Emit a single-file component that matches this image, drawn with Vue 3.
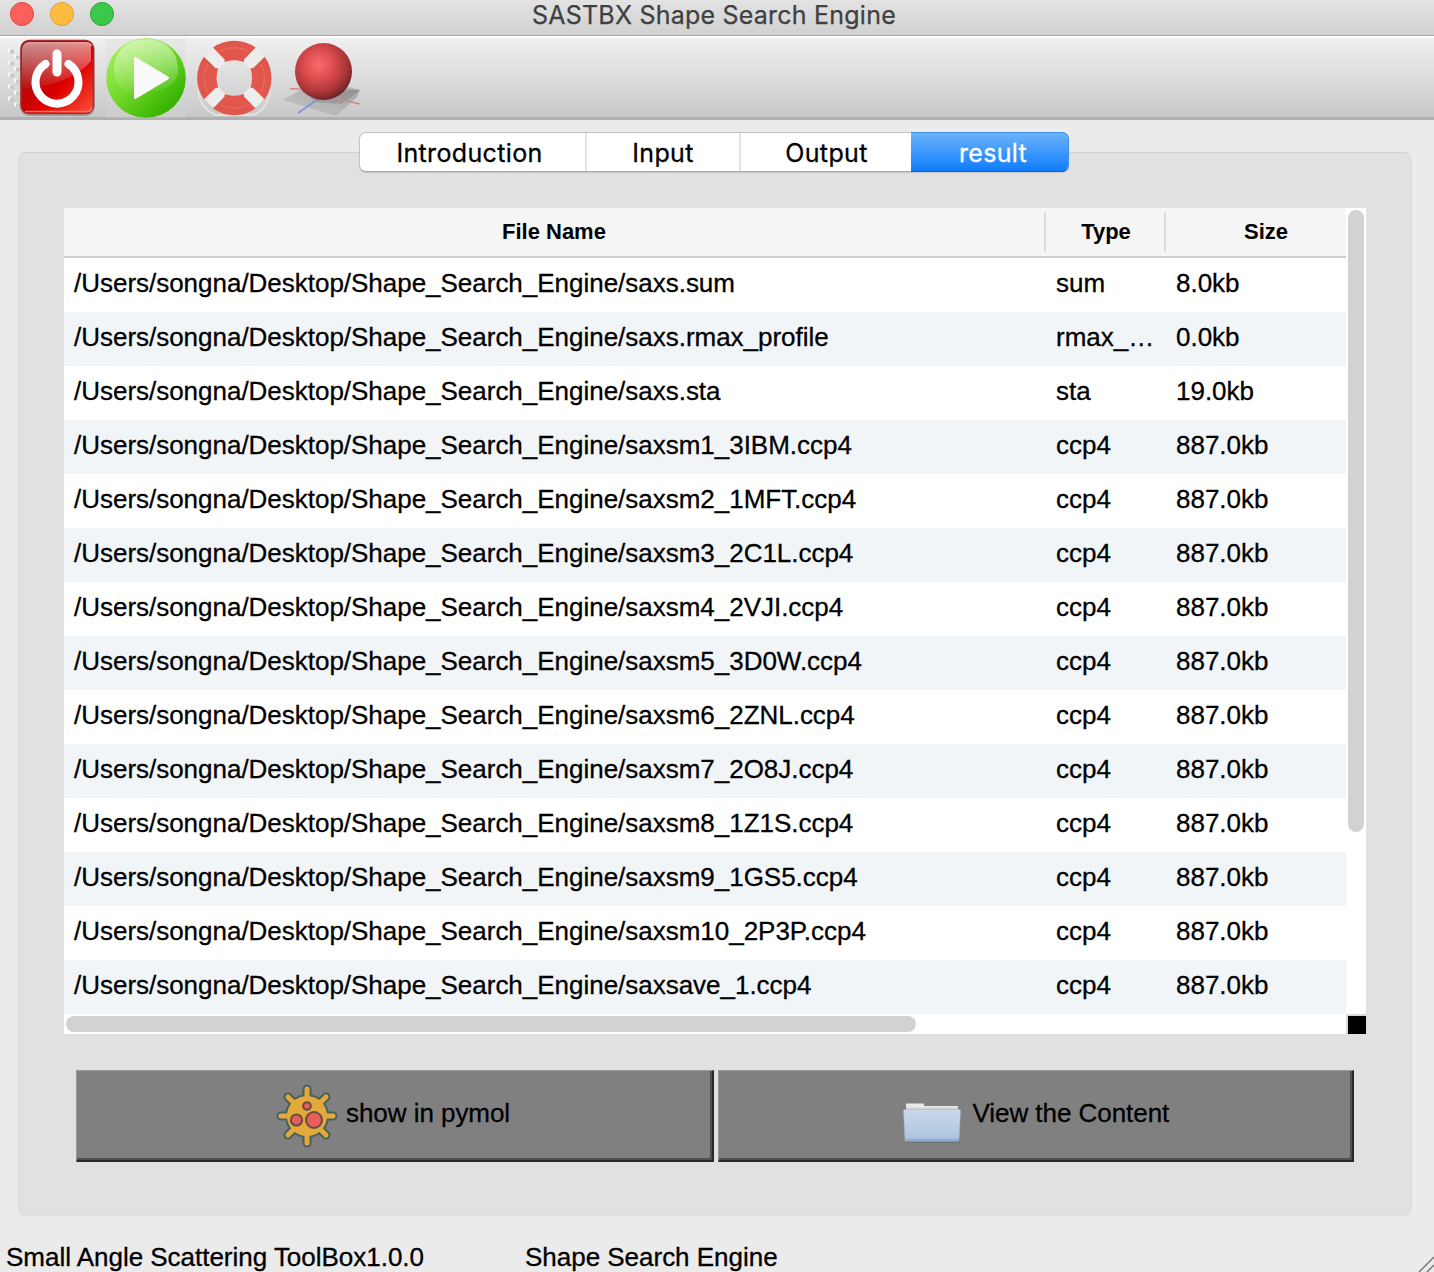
<script setup>
const dir = '/Users/songna/Desktop/Shape_Search_Engine/'
const files = [
  ['saxs.sum', 'sum', '8.0kb'],
  ['saxs.rmax_profile', 'rmax_…', '0.0kb'],
  ['saxs.sta', 'sta', '19.0kb'],
  ['saxsm1_3IBM.ccp4', 'ccp4', '887.0kb'],
  ['saxsm2_1MFT.ccp4', 'ccp4', '887.0kb'],
  ['saxsm3_2C1L.ccp4', 'ccp4', '887.0kb'],
  ['saxsm4_2VJI.ccp4', 'ccp4', '887.0kb'],
  ['saxsm5_3D0W.ccp4', 'ccp4', '887.0kb'],
  ['saxsm6_2ZNL.ccp4', 'ccp4', '887.0kb'],
  ['saxsm7_2O8J.ccp4', 'ccp4', '887.0kb'],
  ['saxsm8_1Z1S.ccp4', 'ccp4', '887.0kb'],
  ['saxsm9_1GS5.ccp4', 'ccp4', '887.0kb'],
  ['saxsm10_2P3P.ccp4', 'ccp4', '887.0kb'],
  ['saxsave_1.ccp4', 'ccp4', '887.0kb'],
]
</script>

<template>
  <div class="window">
    <header class="titlebar">
      <div class="lights"><i class="close"></i><i class="minimize"></i><i class="expand"></i></div>
      <span class="title">SASTBX Shape Search Engine</span>
    </header>

    <nav class="toolbar">
      <svg width="370" height="84" viewBox="0 36 370 84">
        <defs>
          <linearGradient id="red" x1="0" y1="0" x2="1" y2="1">
            <stop offset="0" stop-color="#8c0a0a" /><stop offset=".35" stop-color="#b60808" />
            <stop offset=".6" stop-color="#dc0000" /><stop offset="1" stop-color="#ff5038" />
          </linearGradient>
          <linearGradient id="gloss" x1="0" y1="0" x2="0" y2="1">
            <stop offset="0" stop-color="#fff" stop-opacity=".55" /><stop offset="1" stop-color="#fff" stop-opacity=".03" />
          </linearGradient>
          <linearGradient id="green" x1=".1" y1=".1" x2=".8" y2=".85">
            <stop offset="0" stop-color="#a4ee5a" /><stop offset=".5" stop-color="#72d82a" /><stop offset="1" stop-color="#38b400" />
          </linearGradient>
          <radialGradient id="ball" cx=".42" cy=".38" r=".62">
            <stop offset="0" stop-color="#fa6c6c" /><stop offset=".45" stop-color="#d94a4c" />
            <stop offset=".8" stop-color="#a93437" /><stop offset="1" stop-color="#70252a" />
          </radialGradient>
          <linearGradient id="shade" x1="0" y1="1" x2="1" y2="0">
            <stop offset="0" stop-color="#c4c4c4" /><stop offset="1" stop-color="#8b8b8b" />
          </linearGradient>
          <clipPath id="squareClip"><rect x="22" y="42" width="71" height="71" rx="7" /></clipPath>
        </defs>

        <g v-for="n in 5" :key="n">
          <path :d="`M8 ${36.5 + n * 12}h4v4h-4zM14 ${42.5 + n * 12}h4v4h-4z`" fill="#f8f8f8" />
          <path :d="`M10 ${37.5 + n * 12}h4v4h-4zM16 ${43.5 + n * 12}h4v4h-4z`" fill="#c9c9c9" />
        </g>

        <rect x="20" y="41" width="75" height="75" rx="9" fill="#555" opacity=".35" />
        <rect x="21" y="40.500" width="72.500" height="73" rx="8" fill="url(#red)" stroke="#a72a2a" stroke-width="1.500" />
        <path d="M22 89C48 87 76 79 91 61V42H22z" fill="url(#gloss)" clip-path="url(#squareClip)" />
        <path d="M25 45q2-2 5-2h56q4 0 6 3" fill="none" stroke="#f0b0b0" stroke-opacity=".5" stroke-width="1.500" />
        <path d="M25 111.500h63q3 0 4-4" fill="none" stroke="#ee7770" stroke-width="1.500" />
        <path d="M45.500 64A21.500 21.500 0 1 0 68.500 64" fill="none" stroke="#fff" stroke-width="8" stroke-linecap="round" />
        <path d="M57 54v18" stroke="#fff" stroke-width="9" stroke-linecap="round" />

        <rect x="106" y="39" width="80" height="79" fill="#d8d8d8" opacity=".3" />
        <circle cx="146" cy="78" r="39.800" fill="url(#green)" />
        <path d="M114 72C113 51 127 39 146 39s33 12 32 33c-2 14-17 20-33 22c-17 3-30-6-31-22z" fill="url(#gloss)" />
        <path d="M134.500 57.500Q134.500 57 135.500 57.500L168 77q1.500 1 0 2L135.500 98.500q-1 .6-1-.5z" fill="#fafafa" stroke="#fafafa" />

        <path d="M198 88q1 20 18 27h37q17-7 17-27" fill="none" stroke="#e2e2e2" stroke-width="2" />
        <circle cx="234.300" cy="78" r="27" fill="none" stroke="#ededed" stroke-width="18.500" />
        <g v-for="a in [0, 90, 180, 270]" :key="a" :transform="`rotate(${a} 234.300 78)`">
          <path d="M213 47.600A37 37 0 0 1 255.600 47.600L244 59.500v2.500Q234.300 58.500 224.600 62V59.500z" fill="#e2574c" />
          <path d="M220 51.500a30 30 0 0 1 28.600 0" fill="none" stroke="#e76c62" stroke-width="1.200" />
        </g>

        <path d="M283 100L304 88 360 90 356 98 336 116z" fill="url(#shade)" opacity=".65" />
        <path d="M306 91l44-4 10 3-18 14-28-2z" fill="#666" opacity=".28" />
        <path d="M290 88.500l15 1M338 99l22 5" stroke="#ce8a8a" stroke-width="1.500" />
        <path d="M298 113l20-14" stroke="#8795d0" stroke-width="2" />
        <circle cx="323.500" cy="71.500" r="28.500" fill="url(#ball)" />
      </svg>
    </nav>

    <main class="body">
      <div class="tabs">
        <div class="tab t1">Introduction</div>
        <div class="tab t2">Input</div>
        <div class="tab t3">Output</div>
        <div class="tab t4">result</div>
      </div>
      <section class="panel">
        <div class="list">
          <div class="main-col">
            <div class="head"><b class="name">File Name</b><b class="type">Type</b><b class="size">Size</b></div>
            <div v-for="f in files" :key="f[0]" class="row">
              <span class="name">{{ dir + f[0] }}</span><span class="type">{{ f[1] }}</span><span class="size">{{ f[2] }}</span>
            </div>
            <div class="hscroll"><i></i></div>
          </div>
          <div class="vscroll"><i></i><b></b></div>
        </div>
        <div class="buttons">
          <button class="show">
            <svg width="64" height="66" viewBox="-32 -33 64 66">
              <path d="M0-27V27M-26 0H26M-19-19L19 19M19-19L-19 19" stroke-linecap="round" stroke="#48605f" stroke-width="9" />
              <circle r="22" fill="#48605f" />
              <path d="M0-27V27M-26 0H26M-19-19L19 19M19-19L-19 19" stroke="#e3a93b" stroke-width="5" stroke-linecap="round" />
              <circle r="20" fill="#e3a93b" />
              <g fill="#e95d5c" stroke="#654c40" stroke-width="2">
                <circle cx="0" cy="-10" r="3.800" /><circle cx="-10.500" cy="4" r="5.600" /><circle cx="7" cy="4" r="8" />
              </g>
            </svg>
            <span>show in pymol</span>
          </button>
          <button class="view">
            <svg width="60" height="44" viewBox="0 0 60 44">
              <defs><linearGradient id="folder" x1="0" y1="0" x2="0" y2="1">
                <stop offset="0" stop-color="#cad8eb" /><stop offset=".88" stop-color="#b0c4df" /><stop offset="1" stop-color="#819dc5" />
              </linearGradient></defs>
              <path d="M3 38h54v3H3z" fill="#666" opacity=".6" />
              <path d="M3 1.500h18v2.500h34v8H3z" fill="#e9e9e9" />
              <path d="M3 5.500h52v3H3z" fill="#d4d4d4" />
              <path d="M.5 8.500q0-1 1-1h55q1 0 1 1l-1.500 30q0 1-1 1h-52q-1 0-1-1z" fill="url(#folder)" stroke="#9fb2ce" stroke-width=".5" />
            </svg>
            <span>View the Content</span>
          </button>
        </div>
      </section>
    </main>

    <footer class="status">
      <span class="s1">Small Angle Scattering ToolBox1.0.0</span><span>Shape Search Engine</span>
      <svg class="grip" width="16" height="16" viewBox="0 0 16 16"><path d="M1 16L16 1M9 16l7-7" stroke="#777" stroke-width="1.500" /></svg>
    </footer>
  </div>
</template>

<style>
body { margin: 0; overflow: hidden; }
</style>

<style scoped>
* { box-sizing: border-box; }
.window { width: 1434px; height: 1272px; display: flex; flex-direction: column; background: #ebebeb; color: #000; font: 26px "Liberation Sans", Arial, sans-serif; letter-spacing: -.02px; overflow: hidden; white-space: nowrap; }
.row, .buttons, .status { -webkit-text-stroke: .3px #000; }
.titlebar { height: 36px; flex: none; display: grid; grid-template-columns: 532px 1fr; background: linear-gradient(#e3e3e3, #d0d0d0); border-bottom: 1px solid #a9a9a9; }
.lights { display: flex; gap: 16px; padding: 2px 0 0 10px; }
.lights i { width: 24px; height: 24px; border-radius: 50%; border: 1px solid; }
.lights .close { background: #fc605b; border-color: #e2463f; }
.lights .minimize { background: #fdbc40; border-color: #e0a030; }
.lights .expand { background: #3cc84a; border-color: #27a834; }
.title { font: 25px/30px Inter, sans-serif; letter-spacing: .22px; color: #404040; -webkit-text-stroke: .25px #404040; }
.toolbar { height: 84px; flex: none; background: linear-gradient(#f0f0f0, #c8c8c8); border-top: 2px solid #fff; border-bottom: 3px solid #b0b0b0; display: flex; }
.toolbar svg { margin-top: -2px; flex: none; }
.body { padding: 12px 22px 0 18px; display: flex; flex-direction: column; height: 1097px; flex: none; }
.tabs { position: relative; z-index: 1; display: flex; align-self: flex-start; margin-left: 341px; width: 710px; height: 40px; border-radius: 7px; border: 1px solid #c3c3c3; border-bottom-color: #aaa; background: #fff; box-shadow: 0 1px 1px #0002; flex: none; }
.tab { font: 25px/40px Inter, sans-serif; letter-spacing: .35px; -webkit-text-stroke: .3px; text-align: center; border-right: 2px solid #e4e4e4; height: 38px; }
.t1 { width: 227px; padding-right: 6px; }
.t2 { width: 154px; }
.t3 { width: 170px; border: 0; padding-left: 1px; }
.t4 { width: 158px; height: 40px; margin: -1px -1px -1px 0; border: 1px solid #3c90f0; border-left: 0; border-bottom-color: #0c64e8; border-radius: 0 7px 7px 0; padding-left: 7px; color: #fff; background: linear-gradient(#6bb3fa, #0f7dfd); }
.panel { margin-top: -20px; height: 1064px; width: 1394px; flex: none; background: #e1e1e1; border: 1px solid #dcdcdc; border-top-color: #d0d0d0; border-radius: 8px; padding: 55px 0 0 45px; }
.list { display: flex; width: 1302px; height: 826px; background: #fff; }
.main-col { width: 1282px; display: flex; flex-direction: column; }
.head { height: 50px; flex: none; display: flex; align-items: flex-start; background: #f5f5f5; border-bottom: 2px solid #cfcfcf; font-size: 22px; line-height: 39px; text-align: center; padding-top: 4px; }
.head b { height: 40px; flex: none; }
.name { width: 982px; }
.type { width: 120px; }
.size { width: 180px; }
.head .name, .head .type { border-right: 2px solid #dadada; }
.head .type { padding-left: 2px; }
.head .size { width: 200px; }
.row { display: flex; height: 54px; flex: none; line-height: 50px; }
.row:nth-child(odd) { background: #f1f5f8; }
.row span { padding-left: 10px; }
.hscroll { height: 20px; padding: 2px; }
.hscroll i { display: block; width: 850px; height: 16px; border-radius: 8px; background: #d2d2d2; }
.vscroll { width: 20px; padding-top: 2px; display: flex; flex-direction: column; justify-content: space-between; }
.vscroll i { width: 16px; height: 622px; margin-left: 2px; border-radius: 8px; background: #d2d2d2; }
.vscroll b { height: 20px; background: #000; border: 2px solid #d9d9d9; border-width: 2px 0 0 2px; }
.buttons { display: flex; gap: 4px; margin: 36px 0 0 12px; }
.buttons button { height: 92px; background: #808080; border: solid; border-width: 1px 2px 2px 1px; border-color: #989898 #292929 #292929 #989898; box-shadow: inset -2px -2px #4f4f4f; padding: 0; display: flex; align-items: flex-start; font: 26px/30px "Liberation Sans", Arial, sans-serif; letter-spacing: -.05px; color: #000; }
.show { width: 638px; }
.view { width: 636px; }
.buttons svg { flex: none; }
.show svg { margin: 12px 0 0 198px; }
.show span { margin: 27px 0 0 7px; }
.view svg { margin: 31px 0 0 184px; }
.view span { margin: 27px 0 0 9.500px; }
.status { position: relative; display: flex; flex: 1; padding: 25px 0 0 6px; line-height: 30px; }
.s1 { width: 519px; }
.grip { position: absolute; right: 0; bottom: 0; }
</style>
